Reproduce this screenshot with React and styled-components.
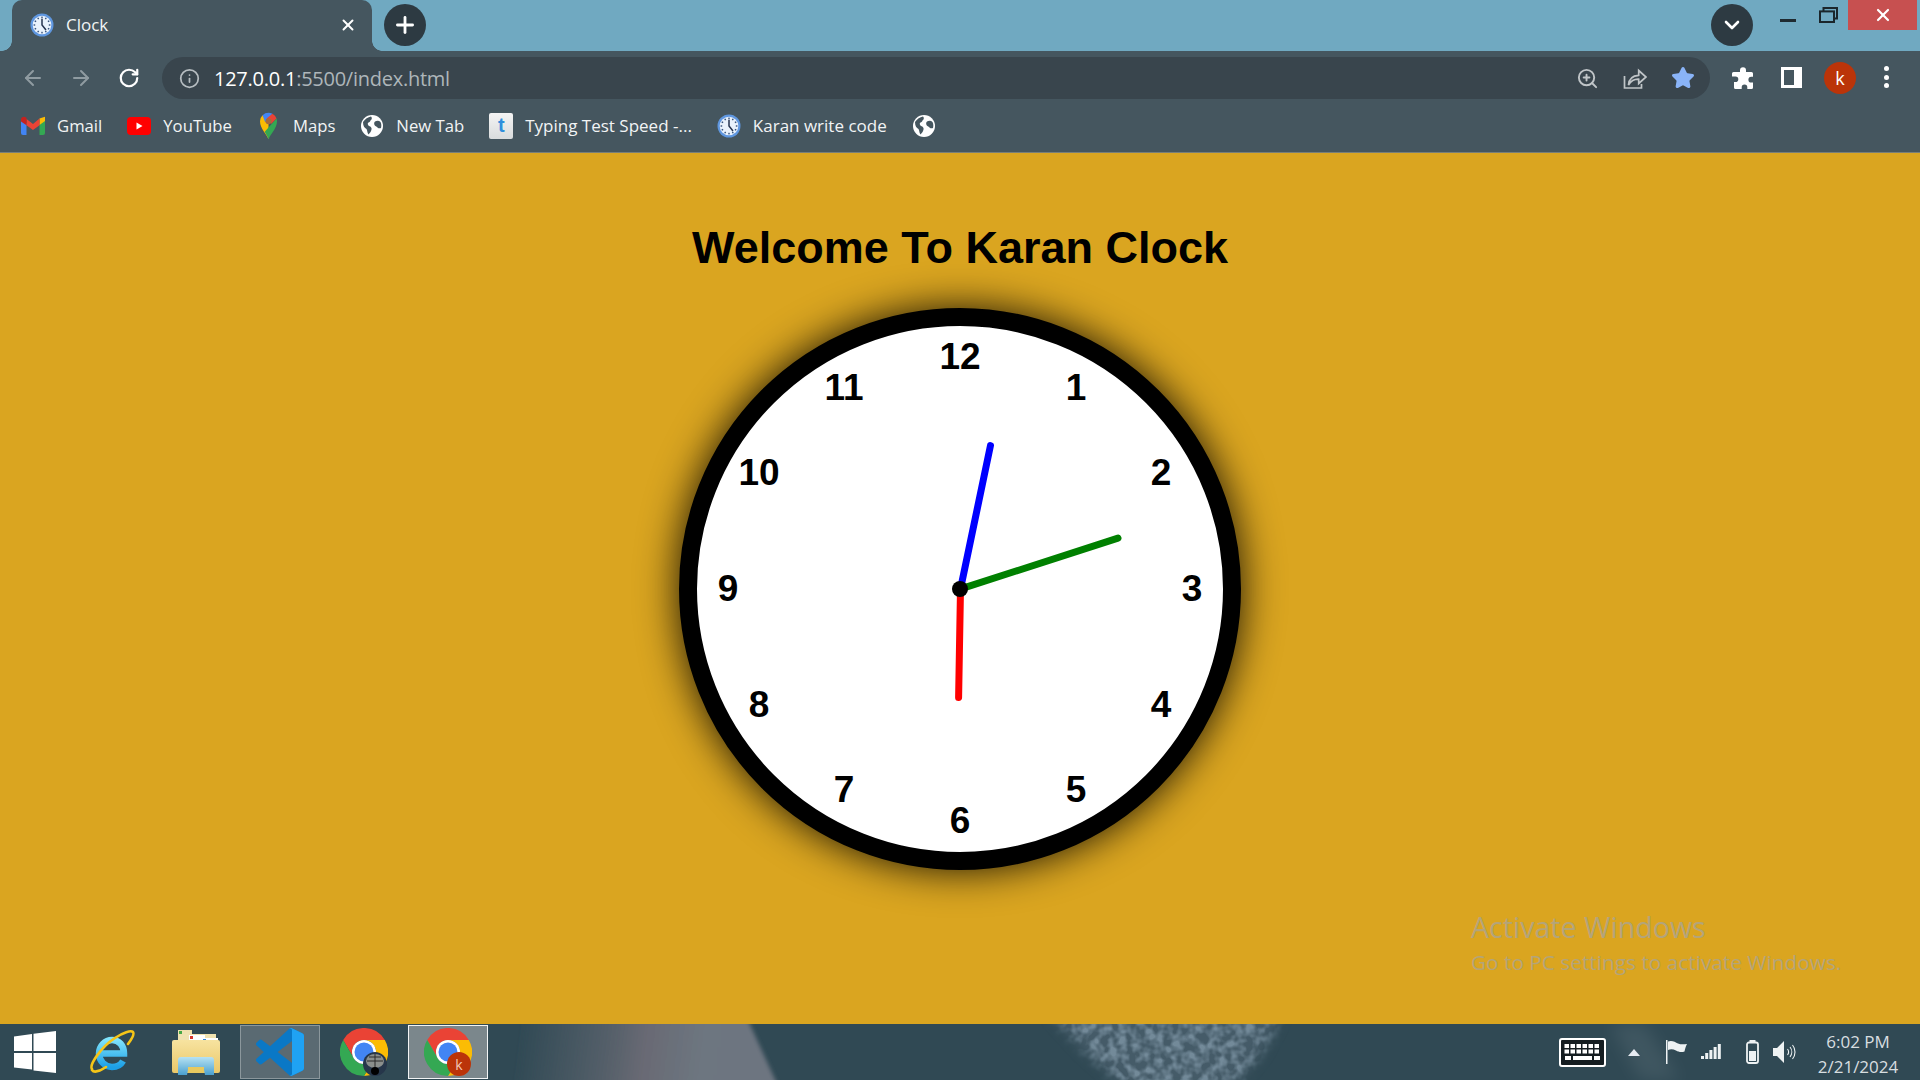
import React from "react";
import styled, { createGlobalStyle } from "styled-components";
import { ArrowLeft, ArrowRight, RotateCw, Info, ZoomIn, Star, X, Plus, ChevronDown } from "lucide-react";

const GlobalStyle = createGlobalStyle`
  html, body { margin: 0; padding: 0; background: #daa520; }
  * { box-sizing: border-box; }
`;

const uiFont = `"Open Sans", "Noto Sans", "Liberation Sans", sans-serif`;

export default function App() {
  const numbers = [12, 1, 2, 3, 4, 5, 6, 7, 8, 9, 10, 11];
  return (
    <Screen>
      <GlobalStyle />
      <TabStrip>
        <Tab>
          <TabFavicon><ClockFavicon /></TabFavicon>
          <TabTitle>Clock</TabTitle>
          <TabClose><X size={18} strokeWidth={2.6} /></TabClose>
        </Tab>
        <RoundButton $ml={12}><Plus size={26} strokeWidth={2.6} /></RoundButton>
        <StripSpacer />
        <RoundButton><ChevronDown size={24} strokeWidth={2.6} /></RoundButton>
        <WindowButtons>
          <MinimizeBtn />
          <RestoreBtn>
            <svg width="19" height="16" viewBox="0 0 19 16" fill="none" stroke="#1b262b" strokeWidth="2">
              <rect x="1" y="4.400" width="14" height="10.600" />
              <path d="M4.500 4V1h13.500v10.400H15" />
            </svg>
          </RestoreBtn>
          <CloseBtn><X size={20} strokeWidth={2.6} color="#fff" /></CloseBtn>
        </WindowButtons>
      </TabStrip>

      <Toolbar>
        <NavButton $dim><ArrowLeft size={24} strokeWidth={2} /></NavButton>
        <NavButton $dim><ArrowRight size={24} strokeWidth={2} /></NavButton>
        <NavButton><RotateCw size={22} strokeWidth={2.4} /></NavButton>
        <Omnibox>
          <InfoIcon><Info size={21} strokeWidth={2} /></InfoIcon>
          <UrlText>127.0.0.1<UrlRest>:5500/index.html</UrlRest></UrlText>
          <OmniSpacer />
          <OmniIcon><ZoomIn size={23} strokeWidth={2} /></OmniIcon>
          <OmniIcon>
            <svg width="24" height="24" viewBox="0 0 24 24" fill="none" stroke="currentColor" strokeWidth="1.700">
              <path d="M1.500 10v12h17v-4" />
              <path d="M5.500 19c.4-5.500 4-9.400 10.200-9.700V4.500L23 11l-7.300 6.500v-4.300c-4.200-.2-7.700 1.700-10.200 5.800z" />
            </svg>
          </OmniIcon>
          <OmniIcon><Star size={24} strokeWidth={2} fill="#8ab4f8" color="#8ab4f8" /></OmniIcon>
        </Omnibox>
        <PuzzleSlot>
          <svg width="22" height="22" viewBox="0 0 22 22" fill="#fff">
            <path d="M8 3.200a3 3 0 0 1 6 0V5h5.500a1.500 1.500 0 0 1 1.500 1.500v3.300h-1.700a2.900 2.900 0 0 0 0 5.800H21v4.900a1.500 1.500 0 0 1-1.500 1.500h-4.200v-1.600a2.800 2.800 0 0 0-5.600 0V22H3.500A1.500 1.500 0 0 1 2 20.500v-5.400h1.500a2.800 2.800 0 0 0 0-5.600H0V6.500A1.500 1.500 0 0 1 1.500 5H8z" />
          </svg>
        </PuzzleSlot>
        <SidebarIcon><SidebarInner /></SidebarIcon>
        <Avatar>k</Avatar>
        <MenuDots><i /><i /><i /></MenuDots>
      </Toolbar>

      <BookmarksBar>
        <Bookmark><BookmarkIcon><GmailIcon /></BookmarkIcon>Gmail</Bookmark>
        <Bookmark><BookmarkIcon><YoutubeIcon /></BookmarkIcon>YouTube</Bookmark>
        <Bookmark><BookmarkIcon><MapsIcon /></BookmarkIcon>Maps</Bookmark>
        <Bookmark><BookmarkIcon><GlobeIcon /></BookmarkIcon>New Tab</Bookmark>
        <Bookmark $size={17}><BookmarkIcon><TypingIcon>t</TypingIcon></BookmarkIcon>Typing Test Speed -...</Bookmark>
        <Bookmark $size={17}><BookmarkIcon><ClockFavicon /></BookmarkIcon>Karan write code</Bookmark>
        <Bookmark><BookmarkIcon><GlobeIcon /></BookmarkIcon></Bookmark>
      </BookmarksBar>

      <Page>
        <Headline>Welcome To Karan Clock</Headline>
        <ClockFace>
          {numbers.map((n, i) => (
            <ClockNumber key={n} $angle={i * 30}><span>{n}</span></ClockNumber>
          ))}
          <Hand $angle={11.8} $length={150} $color="#0000ff" />
          <Hand $angle={72.1} $length={169} $color="#008000" />
          <Hand $angle={181} $length={112} $color="#ff0000" />
          <Pivot />
        </ClockFace>
        <Watermark>
          <WatermarkTitle>Activate Windows</WatermarkTitle>
          <WatermarkSub>Go to PC settings to activate Windows.</WatermarkSub>
        </Watermark>
      </Page>

      <Taskbar>
        <Wallpaper />
        <StartButton>
          <svg width="42" height="42" viewBox="0 0 42 42" fill="#fff">
            <polygon points="0,5.500 18,3 18,20 0,20" />
            <polygon points="19.500,2.700 42,0 42,20 19.500,20" />
            <polygon points="0,22 18,22 18,38.500 0,36.500" />
            <polygon points="19.500,22 42,22 42,42 19.500,39.500" />
          </svg>
        </StartButton>
        <TaskTile><IeIcon /></TaskTile>
        <TaskTile><FolderIcon /></TaskTile>
        <TaskTile $state="open"><VsCodeIcon /></TaskTile>
        <TaskTile>
          <ChromeIcon />
          <ProfileBadge $bg="#26364a">
            <svg width="24" height="24" viewBox="0 0 24 24">
              <ellipse cx="12" cy="9" rx="9" ry="7" fill="#8b8f8c" />
              <path d="M4 9h16M6 5h12M12 2v16" stroke="#2b2b2b" strokeWidth="1" />
              <circle cx="12" cy="19" r="4" fill="#000" />
            </svg>
          </ProfileBadge>
        </TaskTile>
        <TaskTile $state="active">
          <ChromeIcon />
          <ProfileBadge $bg="#bb3409">k</ProfileBadge>
        </TaskTile>
        <Tray>
          <KeyboardIcon />
          <TrayArrow />
          <TraySlot $ml={26}>
            <svg width="22" height="24" viewBox="0 0 22 24" fill="#eef2f3">
              <rect x="0" y="0" width="1.500" height="24" />
              <path d="M2 1.500c4-1.500 7 .5 10 2 3 1.300 6 .8 9 .5-1.500 3-2 5-2.500 7.500-3 1-6 .5-8.500-1-3-1.500-5.500-1.500-8-.5z" />
            </svg>
          </TraySlot>
          <TraySlot $ml={13}>
            <svg width="20" height="16" viewBox="0 0 20 16" fill="#eef2f3">
              <rect x="0" y="12" width="3" height="3" />
              <rect x="4.200" y="9" width="3" height="6" />
              <rect x="8.400" y="6" width="3" height="9" />
              <rect x="12.600" y="3" width="3" height="12" />
              <rect x="16.800" y="0" width="3" height="15" />
            </svg>
          </TraySlot>
          <TraySlot $ml={25}>
            <svg width="13" height="24" viewBox="0 0 13 24" fill="none">
              <rect x="3.500" y="0" width="6" height="3" fill="#eef2f3" />
              <rect x="1" y="2.500" width="11" height="20.500" rx="2" stroke="#eef2f3" strokeWidth="1.800" />
              <rect x="3" y="11" width="7" height="10" fill="#eef2f3" />
            </svg>
          </TraySlot>
          <TraySlot $ml={14}>
            <svg width="24" height="24" viewBox="0 0 24 24" fill="none" stroke="#eef2f3">
              <path d="M0 8h4l7-7v22l-7-7H0z" fill="#eef2f3" stroke="none" />
              <path d="M14.500 9a5 5 0 0 1 0 6M17 7a8 8 0 0 1 0 10M19.500 5a11 11 0 0 1 0 14" strokeWidth="1.100" />
            </svg>
          </TraySlot>
          <TrayClock>
            <span>6:02 PM</span>
            <span>2/21/2024</span>
          </TrayClock>
        </Tray>
      </Taskbar>
    </Screen>
  );
}

function ClockFavicon() {
  const ticks = [0, 30, 60, 90, 120, 150, 180, 210, 240, 270, 300, 330];
  return (
    <svg width="24" height="24" viewBox="0 0 24 24">
      <circle cx="12" cy="12" r="11.500" fill="#5f97e0" />
      <circle cx="12" cy="12" r="9.300" fill="#e9f2fc" />
      {ticks.map((t) => (
        <rect key={t} x="11.300" y="3.600" width="1.400" height="1.600" fill="#33507a" transform={`rotate(${t} 12 12)`} />
      ))}
      <path d="M12 5.800V12l4 5" stroke="#26344f" strokeWidth="1.500" fill="none" />
    </svg>
  );
}

function GlobeIcon() {
  return (
    <svg width="22" height="22" viewBox="0 0 22 22">
      <circle cx="11" cy="11" r="11" fill="#fff" />
      <path d="M2 7c2-3 5-5 8-5.500 1 1 1 2 .5 3-1.500 1-1 2.500-3 3-1.500 1-.5 2.500.5 3.500 2 .5 3 2 2.500 3.500-.5 2-1.500 3.500-3 5-1.500-2-1-4-2-5.500C3.500 13 2 11 2 7z" fill="#45565f" />
      <path d="M14 6.500c2-1 4-1 5.500.5 1 2 1 4 .5 6-1 .5-2.500.5-3.500-.5-1-1.500-2.500-1-3-2.500-.5-1.500-.5-2.500.5-3.500z" fill="#45565f" />
    </svg>
  );
}

function GmailIcon() {
  return (
    <svg width="24" height="19" viewBox="0 0 24 19">
      <path d="M0 3v14a2 2 0 0 0 2 2h3.500V7.500z" fill="#4285f4" />
      <path d="M24 3v14a2 2 0 0 1-2 2h-3.500V7.500z" fill="#34a853" />
      <path d="M18.500 2.500 24 0.800V5l-5.500 4z" fill="#fbbc04" />
      <path d="M5.500 3 12 8l6.500-5.500v6.800L12 14 5.500 9.300z" fill="#ea4335" />
      <path d="M0 3.500C0 1 3 0 5 1.500l.5.500v7.300L0 5.500z" fill="#c5221f" />
    </svg>
  );
}

function YoutubeIcon() {
  return (
    <svg width="24" height="18" viewBox="0 0 24 18">
      <rect width="24" height="18" rx="4" fill="#ff0000" />
      <path d="M9.500 5.500 15.500 9l-6 3.500z" fill="#fff" />
    </svg>
  );
}

function MapsIcon() {
  return (
    <svg width="17" height="28" viewBox="0 0 18 28">
      <path d="M9 28C7.500 23 0 17 0 9a9 9 0 0 1 2.700-6.400L9 11z" fill="#fbbc04" />
      <path d="M2.700 2.600A9 9 0 0 1 9 0c1.500 0 3 .4 4.200 1L5.500 10z" fill="#4285f4" />
      <path d="M13.200 1A9 9 0 0 1 17.500 6L12 11.500 7 6z" fill="#ea4335" />
      <path d="M17.500 6c.4 1 .5 2 .5 3 0 8-7.500 14-9 19-.8-2.600-2.500-5.300-4-8z" fill="#34a853" />
      <circle cx="9" cy="9" r="3.200" fill="#a56a3c" />
    </svg>
  );
}

function ChromeIcon() {
  return (
    <svg width="48" height="48" viewBox="0 0 48 48">
      <path d="M3.200 12A24 24 0 0 1 44.800 12H24A12 12 0 0 0 13.600 30z" fill="#ea4335" />
      <path d="M44.800 12A24 24 0 0 1 24 48L34.400 30A12 12 0 0 0 24 12z" fill="#fbbc04" />
      <path d="M24 48A24 24 0 0 1 3.200 12L13.600 30A12 12 0 0 0 34.400 30z" fill="#34a853" />
      <circle cx="24" cy="24" r="12" fill="#fff" />
      <circle cx="24" cy="24" r="9.500" fill="#4285f4" />
    </svg>
  );
}

function VsCodeIcon() {
  return (
    <svg width="48" height="48" viewBox="0 0 100 100">
      <path d="M96.500 10.800 75.900.9a6.200 6.200 0 0 0-7.100 1.200L29.400 38 12.200 25a4.200 4.200 0 0 0-5.300.2l-5.500 5a4.200 4.200 0 0 0 0 6.200L16.300 50 1.400 63.600a4.200 4.200 0 0 0 0 6.200l5.500 5a4.200 4.200 0 0 0 5.300.2l17.200-13 39.400 35.900a6.200 6.200 0 0 0 7.100 1.200l20.600-9.900a6.200 6.200 0 0 0 3.500-5.600V16.400a6.200 6.200 0 0 0-3.500-5.600zM75 72.700 45.100 50 75 27.300z" fill="#0a78c6" />
      <path d="M75.900 99.100a6.200 6.200 0 0 1-7.100-1.200c2.300 2.300 6.200.7 6.200-2.600V4.700c0-3.300-3.900-4.900-6.200-2.600a6.200 6.200 0 0 1 7.100-1.200l20.600 9.900a6.200 6.200 0 0 1 3.500 5.600v67.200a6.200 6.200 0 0 1-3.500 5.600z" fill="#1fa2f3" />
    </svg>
  );
}

function IeIcon() {
  return (
    <svg width="46" height="46" viewBox="0 0 46 46" fill="none">
      <defs>
        <linearGradient id="ieBlue" x1="0" y1="0" x2="0" y2="1">
          <stop offset="0" stopColor="#7fe3fb" />
          <stop offset="1" stopColor="#1c9fe6" />
        </linearGradient>
      </defs>
      <path d="M11 24.500h24c0-8-5-13.500-12-13.500S10 17 10 24.500 16 38 23 38c5 0 9-2.300 11-6" stroke="url(#ieBlue)" strokeWidth="6.500" />
      <path d="M3 40C0 36 12 18 26 9 34 3.500 42 1 44 3c2 2.500-2 8-5 12" stroke="#f5c518" strokeWidth="2.600" strokeLinecap="round" />
      <path d="M3 41c2 3 8 1 14-3" stroke="#f5c518" strokeWidth="2.600" strokeLinecap="round" />
    </svg>
  );
}

function FolderIcon() {
  return (
    <svg width="48" height="46" viewBox="0 0 48 46">
      <defs>
        <linearGradient id="folderBack" x1="0" y1="0" x2="0" y2="1">
          <stop offset="0" stopColor="#f7e3a0" />
          <stop offset="1" stopColor="#eac869" />
        </linearGradient>
        <linearGradient id="folderPane" x1="0" y1="0" x2="0" y2="1">
          <stop offset="0" stopColor="#b6e2f3" />
          <stop offset="1" stopColor="#4aa0cf" />
        </linearGradient>
      </defs>
      <path d="M6 6V1h14v4h24v8H6z" fill="#f0e2b0" />
      <rect x="7" y="2" width="3" height="3" fill="#46a846" />
      <rect x="17" y="6" width="16" height="6" fill="#fff" />
      <rect x="18" y="7" width="3" height="3" fill="#d8382c" />
      <rect x="30" y="9" width="16" height="6" fill="#fff" />
      <rect x="31" y="10" width="3" height="3" fill="#2f88d8" />
      <path d="M0 13a2 2 0 0 1 2-2h44a2 2 0 0 1 2 2v29a2 2 0 0 1-2 2H2a2 2 0 0 1-2-2z" fill="url(#folderBack)" />
      <path d="M6 46V31a3 3 0 0 1 3-3h30a3 3 0 0 1 3 3v15h-9l-1.500-8h-15L15 46z" fill="url(#folderPane)" />
      <rect x="16" y="38" width="16" height="6" fill="#e8c95f" />
    </svg>
  );
}

function KeyboardIcon() {
  const keys = [];
  for (let r = 0; r < 2; r++) {
    for (let c = 0; c < 6; c++) keys.push(<rect key={`${r}-${c}`} x={5.500 + c * 6} y={6 + r * 5.500} width="4.500" height="4" fill="#fff" />);
  }
  return (
    <TraySlot>
      <svg width="47" height="29" viewBox="0 0 47 29">
        <rect x="1" y="1" width="45" height="27" rx="2" fill="#151d21" stroke="#fff" strokeWidth="2" />
        {keys}
        <rect x="6" y="18" width="6" height="4" fill="#fff" />
        <rect x="14" y="18" width="19" height="4" fill="#fff" />
        <rect x="35" y="18" width="6" height="4" fill="#fff" />
      </svg>
    </TraySlot>
  );
}

function Wallpaper() {
  return (
    <WallpaperLayer>
      <svg width="1920" height="56" viewBox="0 0 1920 56">
        <defs>
          <filter id="leather" x="0" y="0" width="100%" height="100%" colorInterpolationFilters="sRGB">
            <feTurbulence type="fractalNoise" baseFrequency="0.11" numOctaves="2" seed="4" />
            <feColorMatrix values="0 0 0 0 0.45  0 0 0 0 0.54  0 0 0 0 0.60  3 0 0 0 -1.100" />
          </filter>
          <filter id="soft" x="-50%" y="-50%" width="200%" height="200%">
            <feGaussianBlur stdDeviation="8" />
          </filter>
          <filter id="softEdge" x="-10%" y="-20%" width="120%" height="140%">
            <feGaussianBlur stdDeviation="2" />
          </filter>
          <filter id="patchEdge" x="-10%" y="-30%" width="120%" height="160%">
            <feGaussianBlur stdDeviation="6" />
          </filter>
          <mask id="leatherFade">
            <polygon points="1050,-10 1282,-10 1262,28 1232,66 1128,66 1085,28" fill="#fff" filter="url(#patchEdge)" />
          </mask>
          <linearGradient id="band" gradientUnits="userSpaceOnUse" x1="520" y1="0" x2="750" y2="30">
            <stop offset="0" stopColor="#55606a" stopOpacity="0" />
            <stop offset="0.3" stopColor="#55606a" stopOpacity="0.75" />
            <stop offset="0.55" stopColor="#696a74" />
            <stop offset="0.8" stopColor="#6d7680" />
            <stop offset="1" stopColor="#6d7580" />
          </linearGradient>
        </defs>
        <polygon points="500,-6 747,-6 778,62 500,62" fill="url(#band)" filter="url(#softEdge)" />
        <g mask="url(#leatherFade)">
          <rect x="1030" y="0" width="270" height="56" fill="#455b68" />
          <rect x="1030" y="0" width="270" height="56" filter="url(#leather)" />
        </g>
        <polygon points="1610,0 1645,0 1680,56 1640,56" fill="#fff" opacity="0.07" filter="url(#soft)" />
      </svg>
    </WallpaperLayer>
  );
}

const Screen = styled.div`
  width: 1920px;
  height: 1080px;
  display: flex;
  flex-direction: column;
  overflow: hidden;
  font-family: ${uiFont};
`;

const TabStrip = styled.div`
  height: 51px;
  background: #70a9c1;
  display: flex;
  align-items: flex-start;
  padding-left: 12px;
  flex-shrink: 0;
`;

const Tab = styled.div`
  position: relative;
  width: 360px;
  height: 51px;
  background: #45565f;
  border-radius: 10px 10px 0 0;
  display: flex;
  align-items: center;
  padding: 0 15px 2px 18px;
  color: #fff;

  &::before, &::after {
    content: "";
    position: absolute;
    bottom: 0;
    width: 10px;
    height: 10px;
    background: radial-gradient(circle at var(--cx) 0, #70a9c1 9.500px, #45565f 10px);
  }
  &::before { left: -10px; --cx: 0; }
  &::after { right: -10px; --cx: 100%; }
`;

const TabFavicon = styled.span`
  display: flex;
  width: 24px;
  height: 24px;
  margin-right: 12px;
`;

const TabTitle = styled.span`
  flex: 1;
  font-size: 17px;
  color: #f1f4f5;
`;

const TabClose = styled.span`
  display: flex;
  color: #fff;
`;

const RoundButton = styled.div`
  width: 42px;
  height: 42px;
  margin: 4px 0 0 ${(p) => p.$ml || 0}px;
  border-radius: 50%;
  background: #2d3a42;
  color: #fff;
  display: flex;
  align-items: center;
  justify-content: center;
`;

const StripSpacer = styled.div`
  flex: 1;
`;

const WindowButtons = styled.div`
  display: flex;
  align-items: flex-start;
  padding-right: 3px;
  margin-left: 27px;
`;

const MinimizeBtn = styled.div`
  width: 16px;
  height: 3px;
  margin-top: 19px;
  background: #1f2b31;
`;

const RestoreBtn = styled.div`
  display: flex;
  margin: 7px 10px 0 23px;
`;

const CloseBtn = styled.div`
  width: 69px;
  height: 30px;
  background: #c75050;
  display: flex;
  align-items: center;
  justify-content: center;
`;

const Toolbar = styled.div`
  height: 54px;
  background: #45565f;
  display: flex;
  align-items: flex-start;
  padding: 6px 0 0 13px;
  flex-shrink: 0;
`;

const NavButton = styled.div`
  width: 40px;
  height: 42px;
  margin-right: 8px;
  display: flex;
  align-items: center;
  justify-content: center;
  color: ${(p) => (p.$dim ? "#8f9ba1" : "#fff")};
`;

const Omnibox = styled.div`
  width: 1548px;
  margin-left: 5px;
  height: 42px;
  border-radius: 21px;
  background: #39454d;
  display: flex;
  align-items: center;
  padding: 0 15px 0 17px;
`;

const InfoIcon = styled.span`
  display: flex;
  color: #b6bdc1;
  margin-right: 14px;
`;

const UrlText = styled.span`
  font-size: 20px;
  color: #fff;
  letter-spacing: -0.25px;
`;

const UrlRest = styled.span`
  color: #aeb6ba;
`;

const OmniSpacer = styled.div`
  flex: 1;
`;

const OmniIcon = styled.span`
  display: flex;
  width: 24px;
  justify-content: center;
  margin-left: 24px;
  color: #c0c5c8;
`;

const PuzzleSlot = styled.span`
  display: flex;
  margin: 10px 0 0 22px;
`;

const SidebarIcon = styled.span`
  width: 21px;
  height: 21px;
  margin: 10px 0 0 27px;
  background: #fff;
  padding: 3px 8px 3px 3px;
  display: flex;
`;

const SidebarInner = styled.span`
  flex: 1;
  background: #45565f;
`;

const Avatar = styled.span`
  width: 32px;
  height: 32px;
  margin: 5px 0 0 22px;
  border-radius: 50%;
  background: #bb3409;
  color: #fff;
  font-size: 18px;
  display: flex;
  align-items: center;
  justify-content: center;
`;

const MenuDots = styled.span`
  display: flex;
  flex-direction: column;
  gap: 3.500px;
  margin: 9px 0 0 28px;

  i {
    width: 5px;
    height: 5px;
    border-radius: 50%;
    background: #fff;
  }
`;

const BookmarksBar = styled.div`
  height: 48px;
  background: #45565f;
  border-bottom: 1px solid #7a7f78;
  display: flex;
  align-items: center;
  padding: 0 0 6px 21px;
  gap: 25px;
  flex-shrink: 0;
`;

const Bookmark = styled.div`
  display: flex;
  align-items: center;
  gap: 12px;
  font-size: ${(p) => p.$size || 16.7}px;
  color: #f2f4f5;
  white-space: nowrap;
`;

const BookmarkIcon = styled.span`
  width: 24px;
  height: 28px;
  display: flex;
  align-items: center;
  justify-content: center;
`;

const TypingIcon = styled.span`
  width: 24px;
  height: 26px;
  border-radius: 2px;
  background: linear-gradient(#f4f4f4, #d9dcdd);
  color: #2f8fdc;
  font: bold 20px "Liberation Sans", sans-serif;
  display: flex;
  align-items: center;
  justify-content: center;
`;

const Page = styled.main`
  position: relative;
  flex: 1;
  background: #daa520;
  display: flex;
  flex-direction: column;
  align-items: center;
`;

const Headline = styled.h1`
  margin: 69px 0 0;
  font: bold 45px/52px "Liberation Sans", Arial, sans-serif;
  color: #000;
`;

const ClockFace = styled.div`
  position: relative;
  width: 562px;
  height: 562px;
  margin-top: 34px;
  border: 18px solid #000;
  border-radius: 50%;
  background: #fff;
  box-shadow: 0 0 40px rgba(0, 0, 0, 0.9);
`;

const ClockNumber = styled.div`
  position: absolute;
  left: 50%;
  top: 50%;
  width: 0;
  height: 0;
  transform: rotate(${(p) => p.$angle}deg) translateY(-232px) rotate(${(p) => -p.$angle}deg);

  span {
    position: absolute;
    transform: translate(-50%, -50.500%);
    font: bold 37px/1 "Liberation Sans", Arial, sans-serif;
    color: #000;
  }
`;

const Hand = styled.div`
  position: absolute;
  left: calc(50% - 3.500px);
  bottom: 50%;
  width: 7px;
  height: ${(p) => p.$length}px;
  border-radius: 3.500px;
  background: ${(p) => p.$color};
  transform-origin: 50% 100%;
  transform: rotate(${(p) => p.$angle}deg);
`;

const Pivot = styled.div`
  position: absolute;
  left: calc(50% - 8px);
  top: calc(50% - 8px);
  width: 16px;
  height: 16px;
  border-radius: 50%;
  background: #000;
`;

const Watermark = styled.div`
  position: absolute;
  left: 1471px;
  top: 756px;
  color: #b3a47a;
  font-family: "Open Sans", sans-serif;
  white-space: nowrap;
`;

const WatermarkTitle = styled.div`
  font-size: 28.600px;
  line-height: 36px;
`;

const WatermarkSub = styled.div`
  font-size: 20.800px;
  line-height: 34px;
`;

const Taskbar = styled.footer`
  position: relative;
  height: 56px;
  background: #304954;
  display: flex;
  align-items: center;
  gap: 4px;
  flex-shrink: 0;
`;

const WallpaperLayer = styled.div`
  position: absolute;
  inset: 0;
  display: flex;
`;

const StartButton = styled.div`
  position: relative;
  width: 68px;
  height: 54px;
  padding-left: 14px;
  display: flex;
  align-items: center;
`;

const TaskTile = styled.div`
  position: relative;
  width: 80px;
  height: 54px;
  display: flex;
  align-items: center;
  justify-content: center;
  background: ${(p) =>
    p.$state === "active" ? "#7b878c" : p.$state === "open" ? "#5a6a72" : "transparent"};
  border: 1px solid
    ${(p) => (p.$state === "active" ? "#f2f4f5" : p.$state === "open" ? "#8b979c" : "transparent")};
`;

const ProfileBadge = styled.span`
  position: absolute;
  right: 16px;
  bottom: 2px;
  width: 24px;
  height: 24px;
  overflow: hidden;
  border-radius: 50%;
  background: ${(p) => p.$bg};
  color: #f4c8b8;
  font-size: 14px;
  display: flex;
  align-items: center;
  justify-content: center;
`;

const Tray = styled.div`
  position: relative;
  margin-left: auto;
  display: flex;
  align-items: center;
  padding-right: 12px;
`;

const TraySlot = styled.span`
  display: flex;
  margin-left: ${(p) => p.$ml || 0}px;
`;

const TrayArrow = styled.span`
  width: 0;
  height: 0;
  margin-left: 22px;
  border-left: 6px solid transparent;
  border-right: 6px solid transparent;
  border-bottom: 7px solid #e6ebf2;
`;

const TrayClock = styled.div`
  width: 100px;
  margin-left: 11px;
  padding-top: 4px;
  display: flex;
  flex-direction: column;
  align-items: center;
  font-size: 17px;
  line-height: 25px;
  color: #d8dee0;
`;
